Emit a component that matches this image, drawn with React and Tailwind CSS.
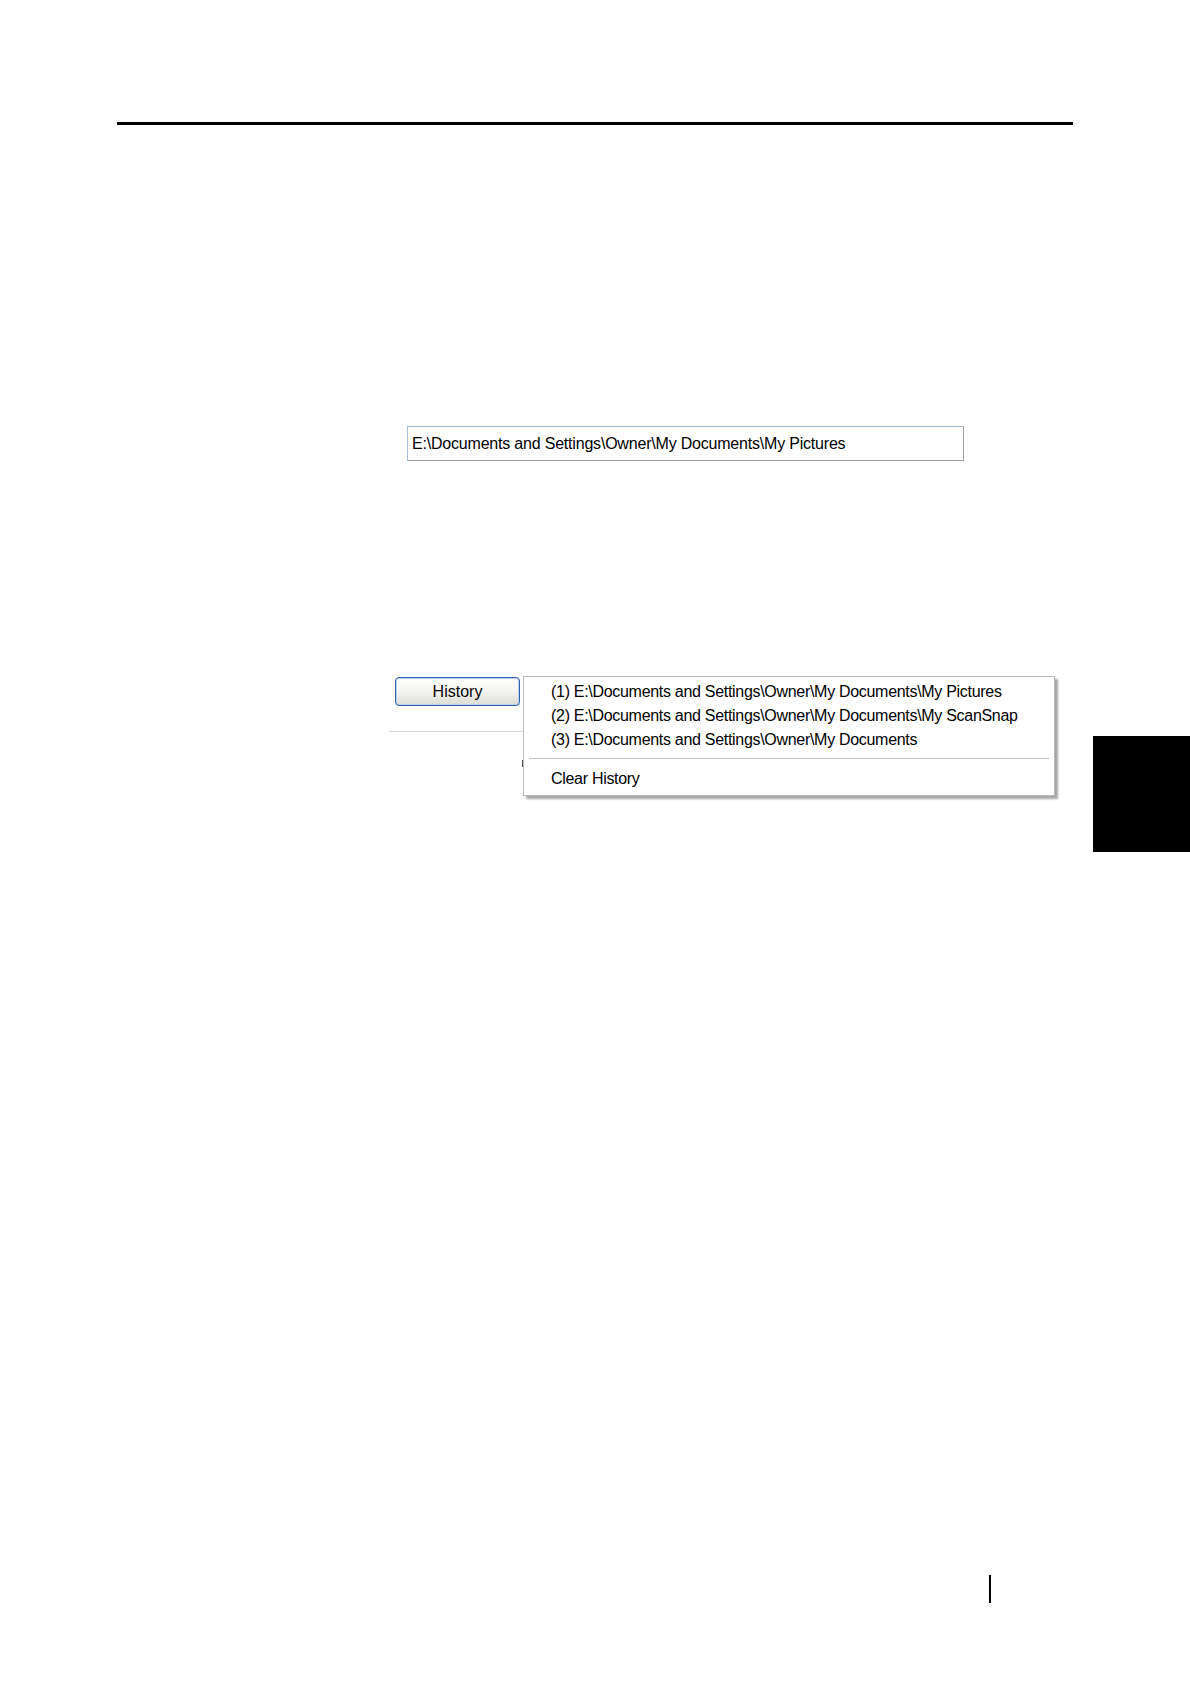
import React from 'react';

const paths = [
  '(1) E:\\Documents and Settings\\Owner\\My Documents\\My Pictures',
  '(2) E:\\Documents and Settings\\Owner\\My Documents\\My ScanSnap',
  '(3) E:\\Documents and Settings\\Owner\\My Documents',
];

const App = () => {
  return (
    <div className="relative w-[1190px] h-[1684px] bg-white font-['Liberation_Sans',Arial,sans-serif] text-black overflow-hidden flex flex-col pt-[122px] pb-[81px]">
      {/* header rule */}
      <div className="ml-[117px] w-[956px] h-[3px] bg-black shrink-0" />

      {/* folder path box */}
      <div className="mt-[301px] ml-[407px] w-[557px] h-[35px] shrink-0 border border-[#a9bcd6] border-r-[#9aa0a8] border-b-[#9aa0a8] flex items-center pl-[4px] text-[16px] tracking-[-0.2px]">
        E:\Documents and Settings\Owner\My Documents\My Pictures
      </div>

      {/* history button + menu, with the chapter tab on the right edge */}
      <div className="mt-[216px] flex items-start shrink-0">
        <div className="relative ml-[389px] w-[134px] flex flex-col">
          <button className="ml-[6px] w-[125px] h-[29px] rounded-[4px] border border-[#2f5fae] bg-gradient-to-b from-white via-[#f4f4f1] to-[#dcdcd6] shadow-[inset_0_0_0_1px_#bcd0ef] text-[16px] leading-none">
            History
          </button>
          <div className="mt-[25px] h-px w-[134px] bg-[#d9d9d9]" />
          <div className="absolute left-[133px] top-[83px] w-[2px] h-[7px] bg-[#555]" />

          <div className="absolute left-[134px] top-[-1px] w-[532px] bg-white border border-[#b9b9b9] shadow-[3px_3px_2px_rgba(0,0,0,0.35)] pt-[3px] pb-[4px] text-[16px] tracking-[-0.3px] z-10">
            {paths.map((p) => (
              <div key={p} className="h-[24px] leading-[24px] pl-[27px] whitespace-nowrap">
                {p}
              </div>
            ))}
            <div className="mt-[6px] mx-[5px] h-px bg-[#c2c2c2]" />
            <div className="mt-[8px] h-[24px] leading-[24px] pl-[27px]">Clear History</div>
          </div>
        </div>

        {/* chapter tab */}
        <div className="ml-auto mt-[59px] w-[97px] h-[116px] bg-black" />
      </div>

      {/* page number bar */}
      <div className="mt-auto ml-[989px] w-[2px] h-[28px] bg-black shrink-0" />
    </div>
  );
};

export default App;
